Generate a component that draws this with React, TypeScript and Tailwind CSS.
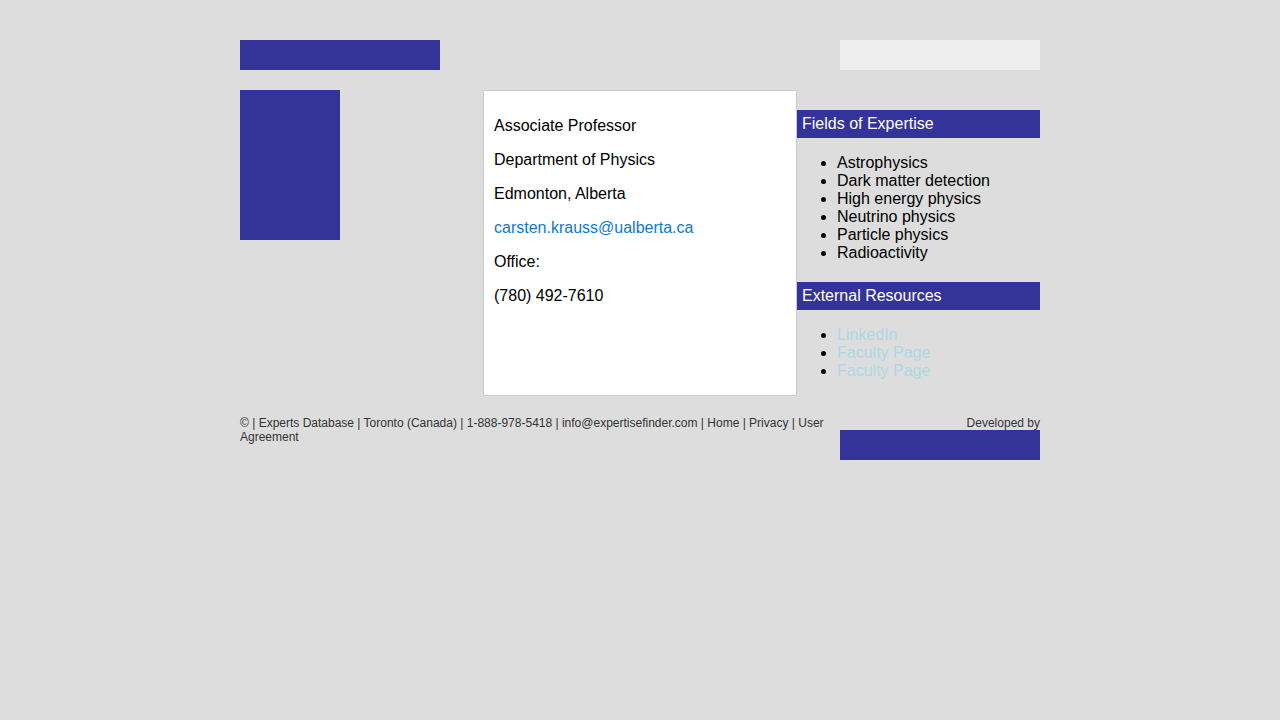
export default function App() {
  const fields = [
    'Astrophysics',
    'Dark matter detection',
    'High energy physics',
    'Neutrino physics',
    'Particle physics',
    'Radioactivity',
  ]
  const links = ['LinkedIn', 'Faculty Page', 'Faculty Page']

  return (
    <div className="min-h-screen bg-[#dddddd] font-['Liberation_Sans',Arial,sans-serif] text-black">
      <div className="mx-auto w-[800px] pt-10">
        {/* Header */}
        <div className="flex justify-between">
          <div className="h-[30px] w-[200px] bg-[#333399]" />
          <div className="h-[30px] w-[200px] bg-[#eeeeee]" />
        </div>

        {/* Main */}
        <div className="mt-5 flex">
          <div className="w-[243px]">
            <div className="h-[150px] w-[100px] bg-[#333399]" />
          </div>

          <div className="h-[306px] w-[314px] border border-[#cccccc] bg-white px-[10px] py-[10px] text-base leading-[18px]">
            <p className="my-4">Associate Professor</p>
            <p className="my-4">Department of Physics</p>
            <p className="my-4">Edmonton, Alberta</p>
            <p className="my-4">
              <a href="#" className="text-[#0a7ad6]">carsten.krauss@ualberta.ca</a>
            </p>
            <p className="my-4">Office:</p>
            <p className="my-4">(780) 492-7610</p>
          </div>

          <div className="w-[243px] text-base leading-[18px]">
            <h3 className="mt-5 h-[28px] bg-[#333399] pl-[5px] leading-[28px] font-normal text-white">
              Fields of Expertise
            </h3>
            <ul className="mt-4 list-disc pl-10">
              {fields.map((f) => (
                <li key={f}>{f}</li>
              ))}
            </ul>
            <h3 className="mt-5 h-[28px] bg-[#333399] pl-[5px] leading-[28px] font-normal text-white">
              External Resources
            </h3>
            <ul className="mt-4 list-disc pl-10">
              {links.map((l, i) => (
                <li key={i}>
                  <a href="#" className="text-[#add8e6]">{l}</a>
                </li>
              ))}
            </ul>
          </div>
        </div>

        {/* Footer */}
        <div className="mt-5 flex justify-between text-xs leading-[14px] text-[#333333]">
          <div className="w-[590px]">
            © | Experts Database | Toronto (Canada) | 1-888-978-5418 | info@expertisefinder.com | Home | Privacy | User Agreement
          </div>
          <div className="flex w-[200px] flex-col items-end">
            <span>Developed by</span>
            <div className="h-[30px] w-[200px] bg-[#333399]" />
          </div>
        </div>
      </div>
    </div>
  )
}
